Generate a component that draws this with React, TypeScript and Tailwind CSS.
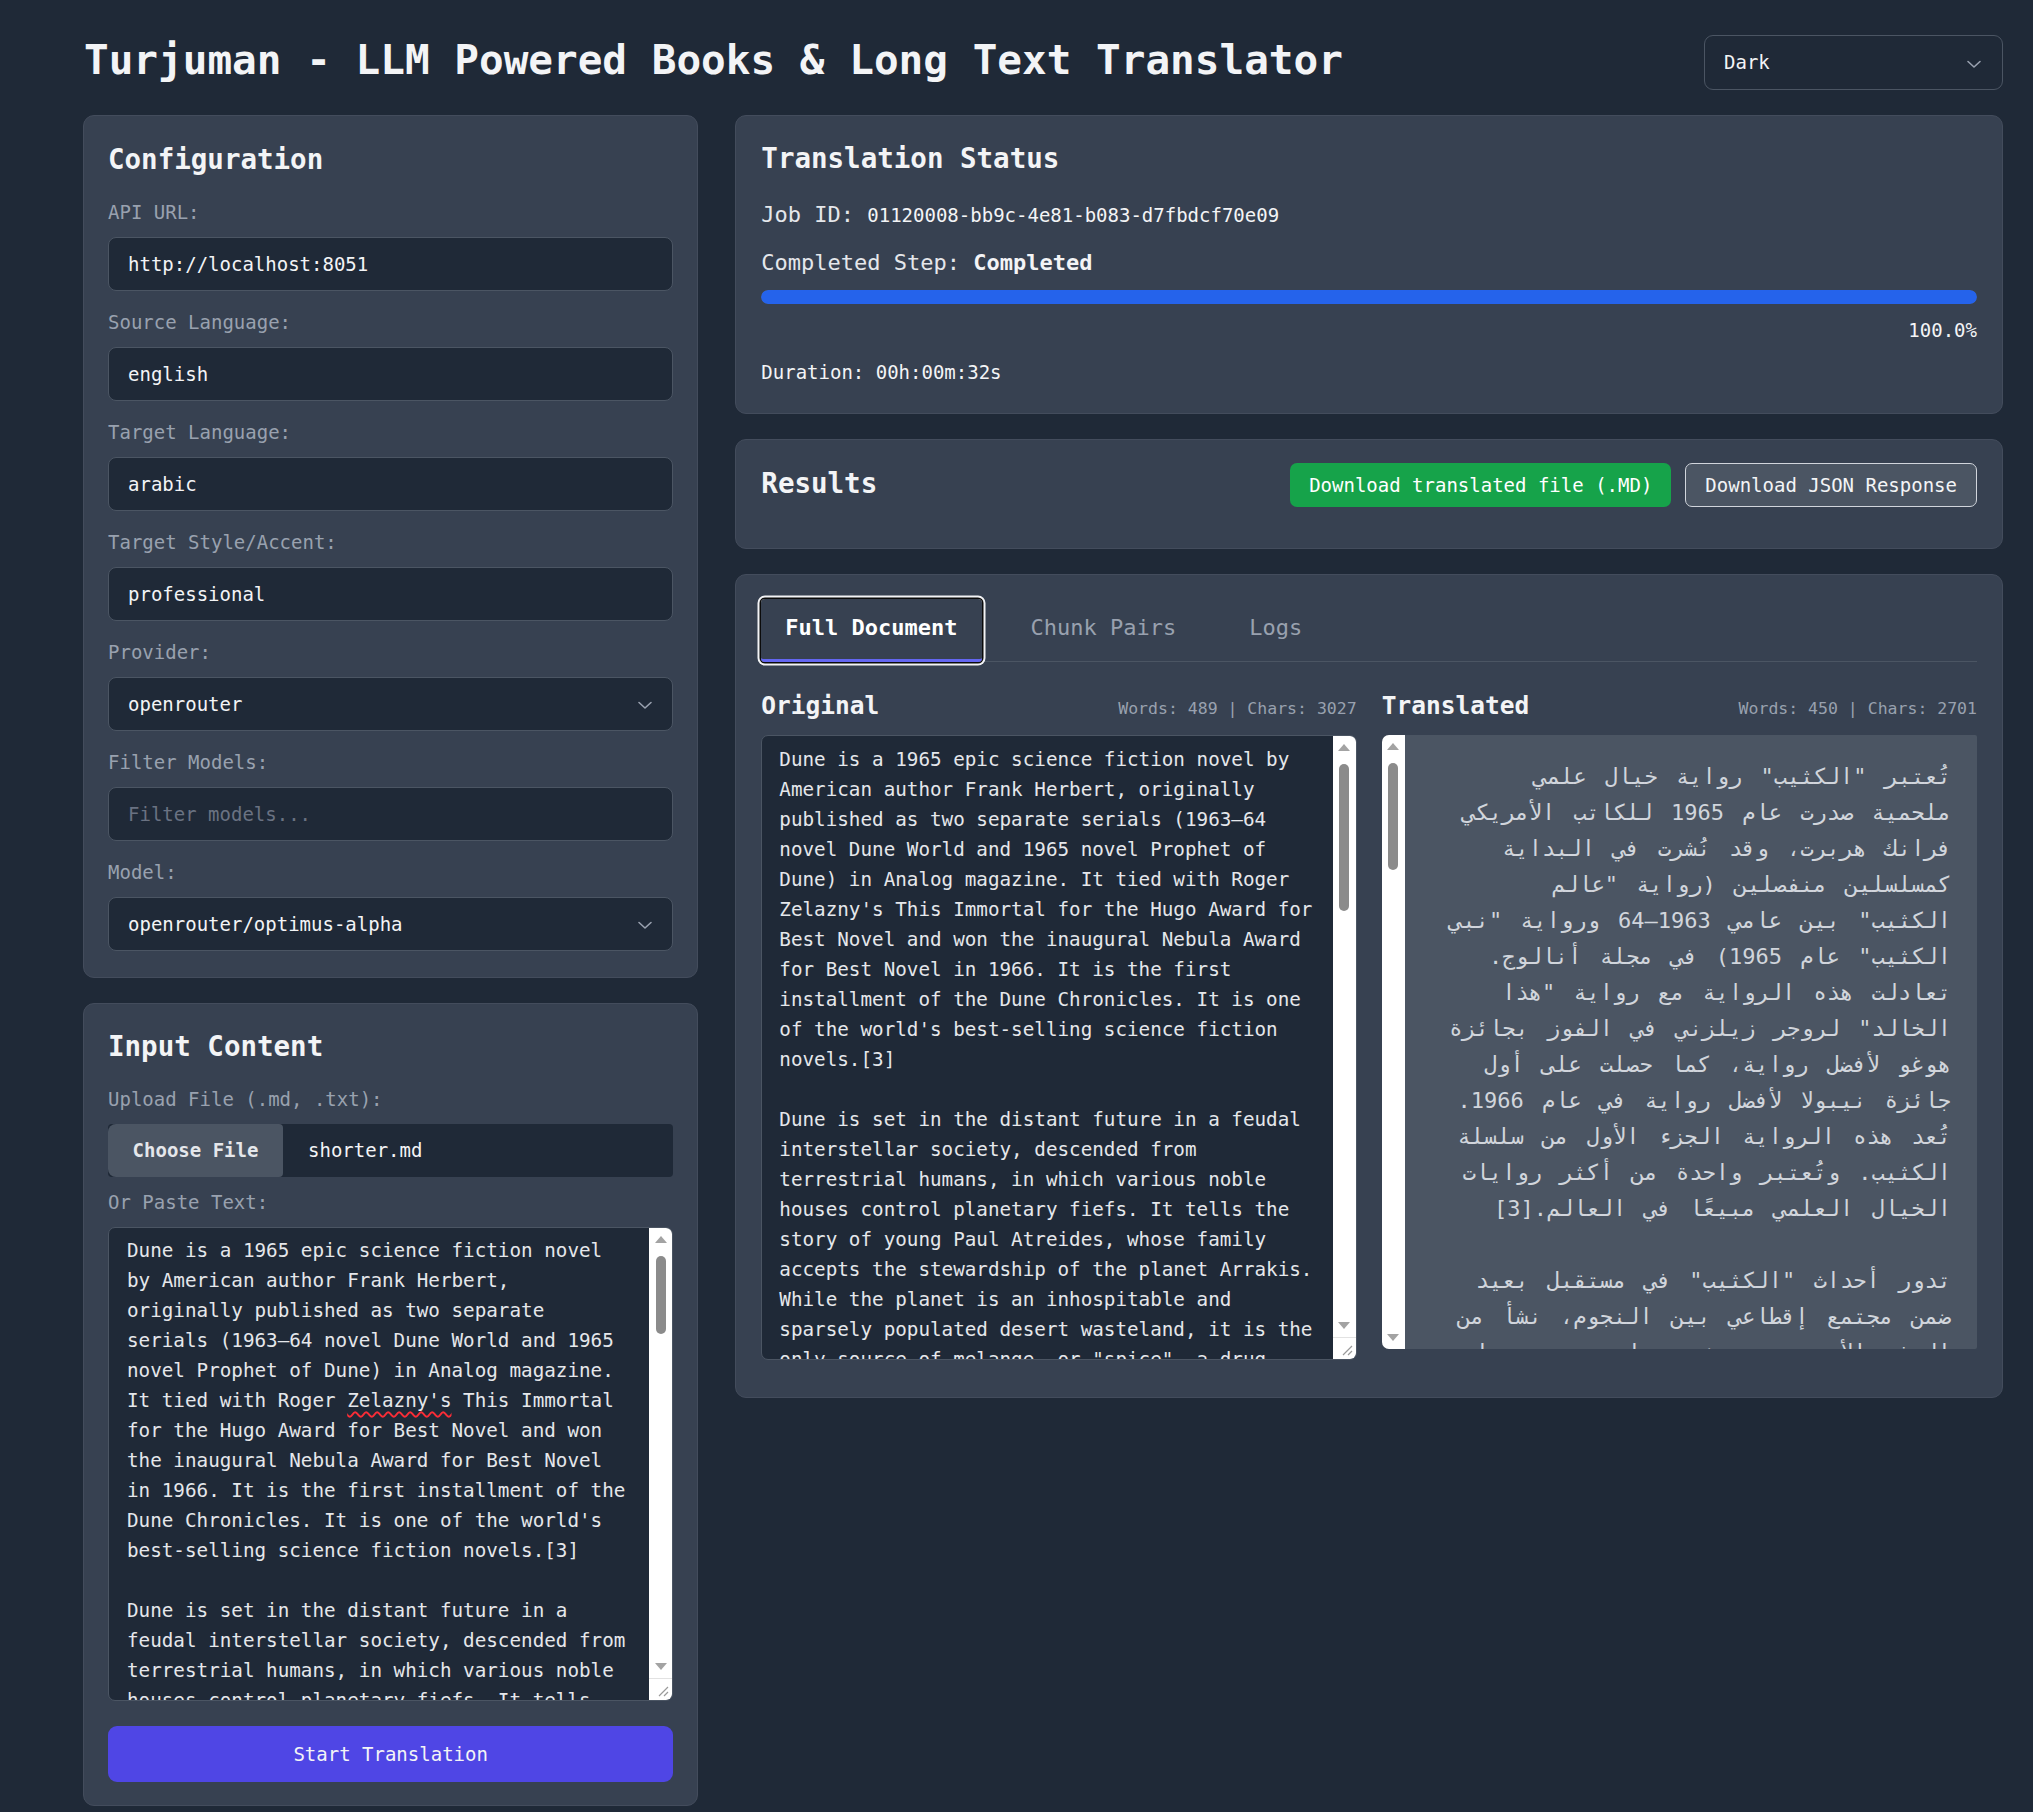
import React from 'react';

const englishText = `Dune is a 1965 epic science fiction novel by American author Frank Herbert, originally published as two separate serials (1963–64 novel Dune World and 1965 novel Prophet of Dune) in Analog magazine. It tied with Roger Zelazny's This Immortal for the Hugo Award for Best Novel and won the inaugural Nebula Award for Best Novel in 1966. It is the first installment of the Dune Chronicles. It is one of the world's best-selling science fiction novels.[3]

Dune is set in the distant future in a feudal interstellar society, descended from terrestrial humans, in which various noble houses control planetary fiefs. It tells the story of young Paul Atreides, whose family accepts the stewardship of the planet Arrakis. While the planet is an inhospitable and sparsely populated desert wasteland, it is the only source of melange, or "spice", a drug that extends life and enhances mental abilities. Melange is also necessary for space navigation, which requires a kind of multidimensional awareness and foresight that only the drug provides. As melange can only be produced on Arrakis, control of the planet is a coveted and dangerous undertaking. The story explores the multilayered interactions of politics, religion, ecology, technology, and human emotion, as the factions of the empire confront each other in a struggle for the control of Arrakis and its spice.[4]

Herbert wrote five sequels: Dune Messiah, Children of Dune, God Emperor of Dune, Heretics of Dune, and Chapterhouse: Dune.`;

const [beforeName, afterName] = englishText.split("Zelazny's");

// translated text, broken into the lines the reference shows
const arabicLines = [
  'تُعتبر "الكثيب" رواية خيال علمي',
  'ملحمية صدرت عام 1965 للكاتب الأمريكي',
  'فرانك هربرت، وقد نُشرت في البداية',
  'كمسلسلين منفصلين (رواية "عالم',
  'الكثيب" بين عامي 1963–64 ورواية "نبي',
  'الكثيب" عام 1965) في مجلة أنالوج.',
  'تعادلت هذه الرواية مع رواية "هذا',
  'الخالد" لروجر زيلزني في الفوز بجائزة',
  'هوغو لأفضل رواية، كما حصلت على أول',
  'جائزة نيبولا لأفضل رواية في عام 1966.',
  'تُعد هذه الرواية الجزء الأول من سلسلة',
  'الكثيب. وتُعتبر واحدة من أكثر روايات',
  'الخيال العلمي مبيعًا في العالم.[3]',
  '',
  'تدور أحداث "الكثيب" في مستقبل بعيد',
  'ضمن مجتمع إقطاعي بين النجوم، نشأ من',
  'البشر الأرضيين، حيث تسيطر بيوت نبيلة',
  'مختلفة على إقطاعيات كوكبية. تحكي',
  'الرواية قصة الشاب بول أتريدس.',
];

const Chevron: React.FC<{ className?: string }> = ({ className }) => (
  <svg className={className} width="16" height="10" viewBox="0 0 16 10" fill="none">
    <path d="M2 2.5 8 8l6-5.5" stroke="currentColor" strokeWidth="1.6" strokeLinecap="round" strokeLinejoin="round" />
  </svg>
);

const Arrow: React.FC<{ down?: boolean }> = ({ down }) => (
  <svg width="12" height="7" viewBox="0 0 12 7">
    <polygon points={down ? '0,0 12,0 6,7' : '6,0 12,7 0,7'} fill="#a3a3a3" />
  </svg>
);

const Scrollbar: React.FC<{ thumb: string; corner?: boolean }> = ({ thumb, corner }) => (
  <div className="w-[23px] shrink-0 bg-white flex flex-col">
    <div className="h-[23px] flex items-center justify-center">
      <Arrow />
    </div>
    <div className="flex-1 pt-[5px] flex justify-center">
      <div className={`w-[10px] rounded-full bg-[#8b8b8b] ${thumb}`} />
    </div>
    <div className="h-[23px] flex items-center justify-center">
      <Arrow down />
    </div>
    {corner && (
      <div className="h-[22px] border-t border-[#e2e2e2] flex items-end justify-end p-[3px]">
        <svg width="11" height="11" viewBox="0 0 11 11">
          <path d="M10 1 1 10M10 6 6 10" stroke="#9a9a9a" strokeWidth="1.2" />
        </svg>
      </div>
    )}
  </div>
);

const Panel: React.FC<{ className?: string; children: React.ReactNode }> = ({ className = '', children }) => (
  <section className={`bg-[#374151] border border-[#434c5c] rounded-[11px] ${className}`}>{children}</section>
);

const Label: React.FC<{ children: React.ReactNode }> = ({ children }) => (
  <label className="block text-[19px] leading-[26px] text-gray-400 mb-[12px]">{children}</label>
);

const TextField: React.FC<{ label: string; value?: string; placeholder?: string; select?: boolean; last?: boolean }> = ({
  label,
  value,
  placeholder,
  select,
  last,
}) => (
  <div className={last ? '' : 'mb-[18px]'}>
    <Label>{label}</Label>
    <div className="relative">
      <div className="h-[54px] flex items-center px-[19px] bg-[#1f2937] border border-[#4b5563] rounded-[8px] text-[19px]">
        {value ? <span className="text-gray-100">{value}</span> : <span className="text-gray-500">{placeholder}</span>}
      </div>
      {select && <Chevron className="absolute right-[20px] top-[23px] text-gray-400" />}
    </div>
  </div>
);

const App: React.FC = () => {
  return (
    <div className="min-h-screen bg-[#1f2937] pl-[83px] pr-[30px] pt-[35px] pb-[8px] font-['DejaVu_Sans_Mono',monospace] text-gray-100">
      {/* Header */}
      <header className="flex items-start justify-between mb-[25px]">
        <h1 className="ml-[1px] text-[41px] leading-[50px] font-bold text-gray-100">
          Turjuman - LLM Powered Books &amp; Long Text Translator
        </h1>
        <div className="relative w-[299px] h-[55px] flex items-center px-[19px] border border-[#4b5563] rounded-[9px] text-[19px] text-gray-100">
          Dark
          <Chevron className="absolute right-[20px] top-[23px] text-gray-400" />
        </div>
      </header>

      <div className="grid grid-cols-3 gap-x-[37px] items-start">
        {/* Left column */}
        <div className="flex flex-col gap-[25px]">
          <Panel className="px-[24px] pt-[25px] pb-[26px]">
            <h2 className="text-[27.5px] leading-[36px] font-bold mb-[22px]">Configuration</h2>
            <TextField label="API URL:" value="http://localhost:8051" />
            <TextField label="Source Language:" value="english" />
            <TextField label="Target Language:" value="arabic" />
            <TextField label="Target Style/Accent:" value="professional" />
            <TextField label="Provider:" value="openrouter" select />
            <TextField label="Filter Models:" placeholder="Filter models..." />
            <TextField label="Model:" value="openrouter/optimus-alpha" select last />
          </Panel>

          <Panel className="px-[24px] pt-[24px] pb-[23px]">
            <h2 className="text-[27.5px] leading-[36px] font-bold mb-[22px]">Input Content</h2>
            <Label>Upload File (.md, .txt):</Label>
            <div className="h-[53px] flex items-center bg-[#1f2937] rounded-[4px] mb-[12px] text-[19px]">
              <span className="h-full w-[175px] flex items-center justify-center bg-[#4b5563] rounded-l-[8px] rounded-r-[4px] font-bold text-gray-200">
                Choose File
              </span>
              <span className="ml-[25px] text-gray-100">shorter.md</span>
            </div>
            <Label>Or Paste Text:</Label>
            <div className="h-[474px] flex bg-[#1f2937] border border-[#4b5563] rounded-[7px] overflow-hidden">
              <div className="flex-1 overflow-hidden whitespace-pre-wrap break-words pl-[18px] pr-[18px] py-[8px] text-[19.25px] leading-[30px] text-gray-200">
                {beforeName}
                <span className="underline decoration-wavy decoration-red-500 decoration-[1.5px] underline-offset-[4px]">Zelazny's</span>
                {afterName}
              </div>
              <Scrollbar thumb="h-[78px]" corner />
            </div>
            <button className="mt-[25px] w-full h-[56px] rounded-[9px] bg-[#4f46e5] text-[19px] text-gray-100">
              Start Translation
            </button>
          </Panel>
        </div>

        {/* Right column */}
        <div className="col-span-2 flex flex-col gap-[25px]">
          <Panel className="px-[25px] pt-[24px] pb-[28px]">
            <h2 className="text-[27.5px] leading-[36px] font-bold">Translation Status</h2>
            <p className="mt-[24px] leading-[30px] text-[22px] text-gray-200">
              Job ID: <span className="text-[19px] text-gray-100">01120008-bb9c-4e81-b083-d7fbdcf70e09</span>
            </p>
            <p className="mt-[18px] leading-[30px] text-[22px] text-gray-200">
              Completed Step: <span className="font-bold text-gray-100">Completed</span>
            </p>
            <div className="mt-[12px] h-[14px] rounded-full bg-[#4b5563] overflow-hidden">
              <div className="h-full w-full rounded-full bg-[#2563eb]" />
            </div>
            <p className="mt-[13px] text-right text-[19px] leading-[26px] text-gray-100">100.0%</p>
            <p className="mt-[16px] text-[19px] leading-[26px] text-gray-100">Duration: 00h:00m:32s</p>
          </Panel>

          <Panel className="px-[25px] pt-[23px] pb-[41px]">
            <div className="flex items-center justify-between h-[44px]">
              <h2 className="text-[27.5px] leading-[36px] font-bold -mt-[4px]">Results</h2>
              <div className="flex gap-[14px]">
                <button className="h-[44px] px-[19px] rounded-[7px] bg-[#16a34a] text-[19px] text-white">
                  Download translated file (.MD)
                </button>
                <button className="h-[44px] px-[19px] rounded-[7px] bg-[#4b5563] border-[1.5px] border-gray-300 text-[19px] text-gray-100">
                  Download JSON Response
                </button>
              </div>
            </div>
          </Panel>

          <Panel className="px-[25px] pt-[24px] pb-[37px]">
            <div className="flex gap-[25px] border-b border-[#4b5563]">
              <button className="-mb-px px-[24px] pt-[14px] pb-[16px] text-[22px] leading-[30px] font-bold text-white border-b-[3px] border-[#6366f1] rounded-[4px] shadow-[0_0_0_1.5px_#0b0b0b,0_0_0_3.5px_#f3f4f6]">
                Full Document
              </button>
              <button className="-mb-px px-[24px] pt-[14px] pb-[16px] text-[22px] leading-[30px] text-gray-400 border-b-[3px] border-transparent">
                Chunk Pairs
              </button>
              <button className="-mb-px px-[24px] pt-[14px] pb-[16px] text-[22px] leading-[30px] text-gray-400 border-b-[3px] border-transparent">
                Logs
              </button>
            </div>

            <div className="mt-[28px] grid grid-cols-2 gap-x-[25px] items-start">
              <div>
                <div className="flex items-baseline justify-between mb-[13px] h-[32px]">
                  <h3 className="text-[24.5px] leading-[32px] font-bold">Original</h3>
                  <span className="text-[16.5px] text-gray-400">Words: 489 | Chars: 3027</span>
                </div>
                <div className="h-[625px] flex bg-[#1f2937] border border-[#4b5563] rounded-[7px] overflow-hidden">
                  <div className="flex-1 overflow-hidden whitespace-pre-wrap break-words pl-[17px] pr-[15px] py-[9px] text-[19.25px] leading-[30px] text-gray-200">
                    {englishText}
                  </div>
                  <Scrollbar thumb="h-[147px]" corner />
                </div>
              </div>
              <div>
                <div className="flex items-baseline justify-between mb-[13px] h-[32px]">
                  <h3 className="text-[24.5px] leading-[32px] font-bold">Translated</h3>
                  <span className="text-[16.5px] text-gray-400">Words: 450 | Chars: 2701</span>
                </div>
                <div dir="rtl" className="h-[614px] flex bg-[#4b5563] rounded-l-[7px] rounded-r-[2px] overflow-hidden">
                  <div className="flex-1 overflow-hidden whitespace-pre pr-[26px] pl-[10px] pt-[24px] text-[22px] leading-[36px] [word-spacing:5px] text-gray-300">
                    {arabicLines.join('\n')}
                  </div>
                  <Scrollbar thumb="h-[107px]" />
                </div>
              </div>
            </div>
          </Panel>
        </div>
      </div>
    </div>
  );
};

export default App;
